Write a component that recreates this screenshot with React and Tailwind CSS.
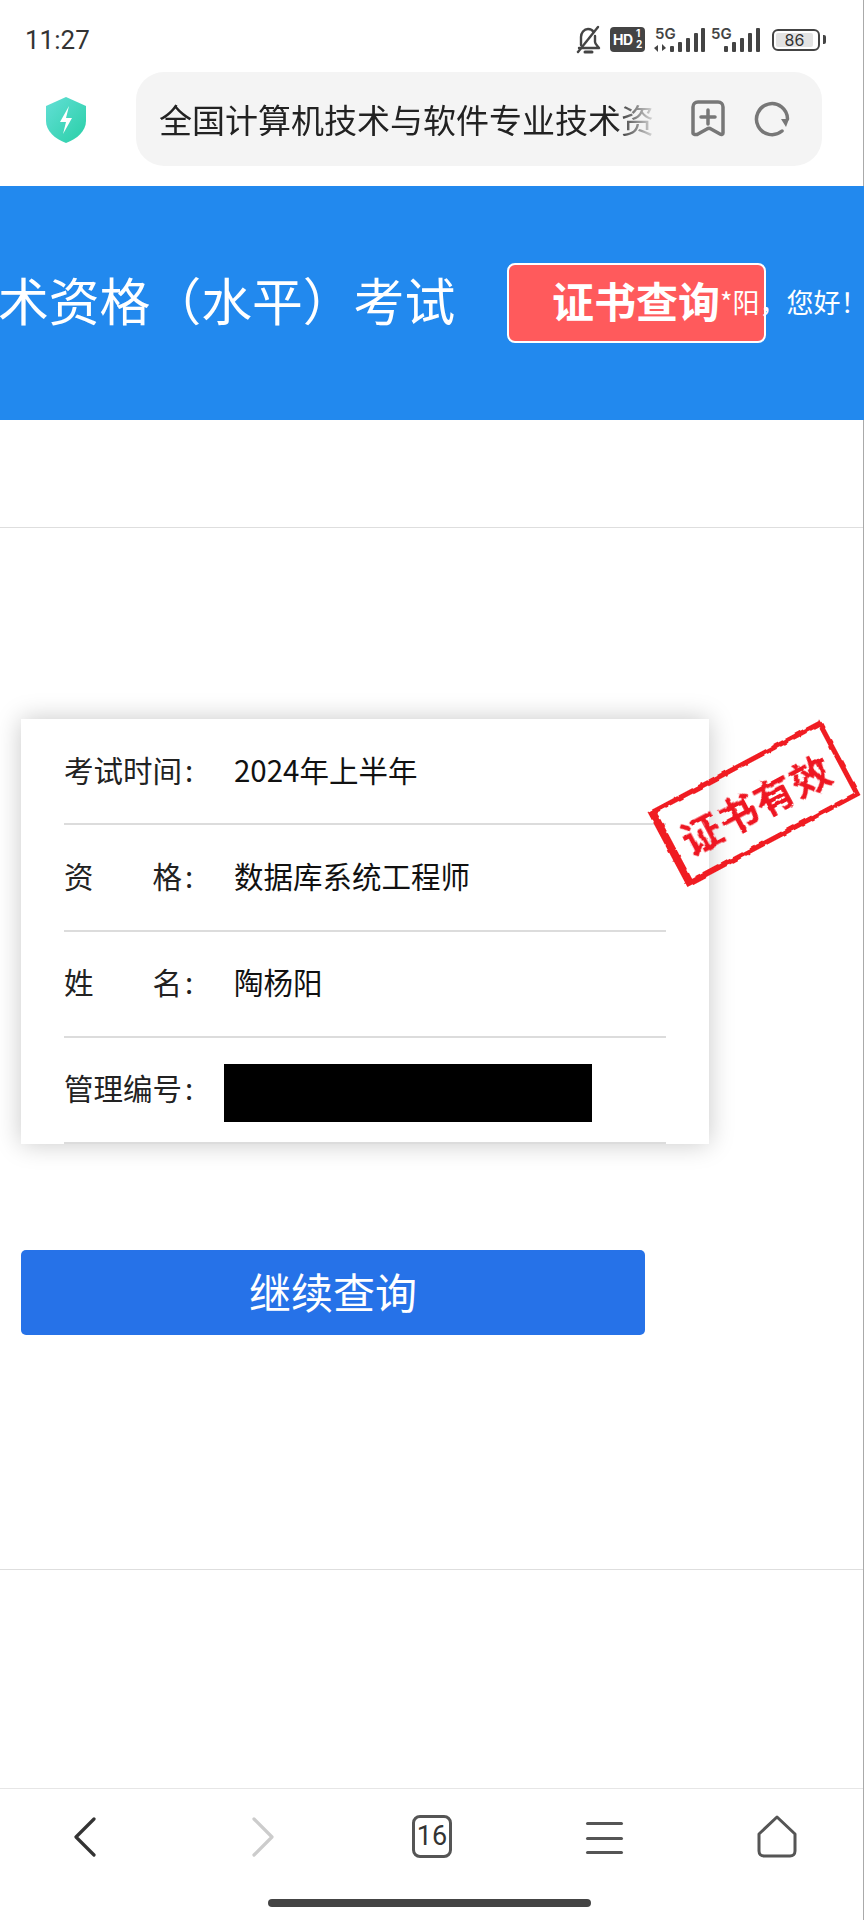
import React from "react";

const cjk = { fontFamily: '"Noto Sans CJK SC", "Noto Sans", sans-serif' };

function Row({ label, value, children }) {
  return (
    <div className="flex h-[106.25px] items-center border-b-2 border-[#dcdcdc] pb-[5px]">
      <div className="flex w-[118px] shrink-0 justify-between text-[29.5px] text-[#222]">
        {label.map((c, i) => (
          <span key={i}>{c}</span>
        ))}
      </div>
      <span className="ml-[3px] w-[6px] shrink-0 text-[29.5px] text-[#222]">:</span>
      {value ? <div className="ml-[43px] text-[29.5px] text-[#111]">{value}</div> : children}
    </div>
  );
}

function StatusIcons() {
  return (
    <div className="flex items-center">
      <svg width="28" height="30" viewBox="0 0 28 30" fill="none" stroke="#444" strokeWidth="2.400" strokeLinecap="round" strokeLinejoin="round">
        <path d="M7 20V12c0-4 3-8 7-8 2.500 0 4.500 1 5.500 3M21 11v6c0 2 2.500 4 4 6H5" />
        <path d="M4 27L24 2" />
        <path d="M11 27h7" strokeWidth="3" />
      </svg>
      <div className="ml-[8px] flex h-[25px] w-[35px] items-center justify-center rounded-[4px] bg-[#444]">
        <svg width="35" height="25" viewBox="0 0 35 25">
          <text x="3" y="18" fill="#fff" fontSize="14" fontWeight="700" fontFamily="Inter, sans-serif" letterSpacing="-0.5">HD</text>
          <text x="26" y="10" fill="#fff" fontSize="10" fontWeight="700" fontFamily="Inter, sans-serif">1</text>
          <text x="26" y="21" fill="#fff" fontSize="10" fontWeight="700" fontFamily="Inter, sans-serif">2</text>
        </svg>
      </div>
      <svg className="ml-[9px] overflow-visible" width="52" height="26" viewBox="0 0 52 26">
        <text x="1" y="12" fill="#444" fontSize="15" fontWeight="600" fontFamily="Inter, sans-serif">5G</text>
        <path d="M0 21l4-3v7zM8 17v7l4-3z" fill="#444" />
        <rect x="16" y="19" width="4" height="6" rx="1" fill="#444" />
        <rect x="24" y="15" width="4" height="10" rx="1" fill="#444" />
        <rect x="32" y="11" width="4" height="14" rx="1" fill="#444" />
        <rect x="40" y="6" width="4" height="19" rx="1" fill="#444" />
        <rect x="47" y="1" width="4" height="24" rx="1" fill="#444" />
      </svg>
      <svg className="ml-[5px] overflow-visible" width="50" height="26" viewBox="0 0 50 26">
        <text x="0" y="12" fill="#444" fontSize="15" fontWeight="600" fontFamily="Inter, sans-serif">5G</text>
        <rect x="13" y="19" width="4" height="6" rx="1" fill="#444" />
        <rect x="21" y="15" width="4" height="10" rx="1" fill="#444" />
        <rect x="29" y="11" width="4" height="14" rx="1" fill="#444" />
        <rect x="37" y="6" width="4" height="19" rx="1" fill="#444" />
        <rect x="45" y="1" width="4" height="24" rx="1" fill="#444" />
      </svg>
      <div className="ml-[11px] flex h-[22px] w-[48px] items-center rounded-[6px] border-2 border-[#444] p-[2px]">
        <div className="flex h-full w-[37px] items-center justify-center rounded-[2px] bg-[#e3e3e3] text-[16px] leading-none text-[#333]" style={{ fontFamily: "Inter, sans-serif" }}>
          86
        </div>
      </div>
      <div className="ml-[3px] h-[9px] w-[3px] rounded-r-[2px] bg-[#444]" />
    </div>
  );
}

export default function App() {
  return (
    <div className="relative flex h-[1920px] w-[864px] flex-col overflow-hidden bg-white" style={cjk}>
      <div className="shrink-0 border-r border-[#aaa]">
        {/* status bar */}
        <div className="flex h-[72px] items-center justify-between pl-[25px] pr-[37px] pt-[7px]">
          <span className="text-[26px] leading-none text-[#333]" style={{ fontFamily: "Roboto, sans-serif" }}>
            11:27
          </span>
          <StatusIcons />
        </div>

        {/* address bar */}
        <div className="flex h-[114px] items-start pl-[46px]">
          <svg className="mt-[25px]" width="40" height="46" viewBox="0 0 40 46">
            <defs>
              <linearGradient id="sh" x1="0" y1="0" x2="1" y2="1">
                <stop offset="0" stopColor="#63dfd6" />
                <stop offset="1" stopColor="#28cfa6" />
              </linearGradient>
            </defs>
            <path d="M20 0L40 9v15c0 10-9 18-20 22C9 42 0 34 0 24V9z" fill="url(#sh)" />
            <path d="M23 9l-9 16h6l-3 12 9-16h-6z" fill="#fff" />
          </svg>
          <div className="ml-[50px] flex h-[94px] w-[686px] items-center rounded-[28px] bg-[#f4f4f4] pl-[23px]">
            <div
              className="w-[495px] overflow-hidden whitespace-nowrap text-[33px] leading-none text-[#222]"
              style={{ maskImage: "linear-gradient(90deg,#000 92%,rgba(0,0,0,0.12) 100%)" }}
            >
              全国计算机技术与软件专业技术资
            </div>
            <svg className="ml-[37px]" width="34" height="38" viewBox="0 0 34 38" fill="none" stroke="#777" strokeWidth="3.500" strokeLinejoin="round" strokeLinecap="round">
              <path d="M2 33V7c0-3 2-5 5-5h20c3 0 5 2 5 5v26c0 1.500-1.500 2-3 1l-9-5c-1-.7-3-.7-4 0l-9 5c-1.500 1-5 .5-5-1z" />
              <path d="M17 10v14M10 17h14" />
            </svg>
            <svg className="ml-[28px]" width="38" height="36" viewBox="0 0 38 36" fill="none" stroke="#777" strokeWidth="3.500" strokeLinecap="round">
              <path d="M29 30A15.500 15.500 0 1 1 34.500 18" />
              <path d="M28 18h8l-3 8z" fill="#777" stroke="none" />
            </svg>
          </div>
        </div>
      </div>

      {/* blue banner */}
      <div className="relative flex h-[234px] shrink-0 items-center whitespace-nowrap bg-[#2289ee] text-white">
        <div className="ml-[-2px] pb-[8px] text-[50.8px] leading-none">术资格（水平）考试</div>
        <div className="ml-[51.8px] flex h-[80px] w-[259px] shrink-0 items-center rounded-[8px] border-2 border-white bg-[#ff5a5c] pb-[6px] pl-[43px]">
          <span className="text-[42px] font-bold leading-none">证书查询</span>
        </div>
        <div className="absolute left-[720px] top-[102px] text-[27px] leading-none">*阳，您好！</div>
      </div>

      <div className="flex flex-1 flex-col border-r border-[#aaa]">
        {/* section */}
        <div className="mt-[107px] flex h-[1043px] shrink-0 flex-col border-y border-[#dedede]">
          <div className="relative ml-[21px] mt-[191px] w-[688px] bg-white px-[43px] shadow-[0_0_24px_rgba(0,0,0,0.22)]">
            <Row label={["考", "试", "时", "间"]} value="2024年上半年" />
            <Row label={["资", "格"]} value="数据库系统工程师" />
            <Row label={["姓", "名"]} value="陶杨阳" />
            <Row label={["管", "理", "编", "号"]}>
              <div className="ml-[33px] mt-[11px] h-[58px] w-[368px] bg-black" />
            </Row>

            {/* stamp */}
            <svg className="absolute" width="0" height="0">
              <filter id="rough">
                <feTurbulence type="fractalNoise" baseFrequency="0.12" numOctaves="2" seed="4" />
                <feDisplacementMap in="SourceGraphic" scale="4" />
              </filter>
            </svg>
            <div className="absolute left-[635px] top-[42px] flex h-[85px] w-[196px] rotate-[-28deg] items-center justify-center border-[5px] border-l-[8px] border-[#f01c24] [filter:url(#rough)]">
              <span className="text-[40px] font-bold leading-none tracking-[1px] text-[#ee1620]">证书有效</span>
            </div>
          </div>

          <button className="ml-[21px] mt-[106px] flex h-[85px] w-[624px] items-center justify-center rounded-[5px] bg-[#2672e8] pb-[4px] text-[42px] leading-none text-white">
            继续查询
          </button>
        </div>

        <div className="flex-1" />

        {/* bottom nav */}
        <div className="relative h-[132px] shrink-0 border-t border-[#e6e6e6]">
          <div className="flex h-[100px] items-start">
            <svg className="ml-[72px] mt-[28px]" width="26" height="40" viewBox="0 0 26 40" fill="none" stroke="#333" strokeWidth="3.200" strokeLinecap="round" strokeLinejoin="round">
              <path d="M22 2L4 20l18 18" />
            </svg>
            <svg className="ml-[152px] mt-[28px]" width="26" height="40" viewBox="0 0 26 40" fill="none" stroke="#ccc" strokeWidth="3.200" strokeLinecap="round" strokeLinejoin="round">
              <path d="M4 2l18 18L4 38" />
            </svg>
            <div className="ml-[136px] mt-[26px] flex h-[43px] w-[40px] items-center justify-center rounded-[8px] border-[3px] border-[#555] text-[27px] leading-none text-[#333]" style={{ fontFamily: "Roboto, sans-serif" }}>
              16
            </div>
            <div className="ml-[134px] mt-[33px] flex h-[32px] w-[37px] flex-col justify-between">
              <div className="h-[3px] rounded-full bg-[#555]" />
              <div className="h-[3px] rounded-full bg-[#555]" />
              <div className="h-[3px] rounded-full bg-[#555]" />
            </div>
            <svg className="ml-[133px] mt-[26px]" width="42" height="43" viewBox="0 0 42 43" fill="none" stroke="#555" strokeWidth="3" strokeLinejoin="round">
              <path d="M21 2l18 17v17c0 3-2 5-5 5H8c-3 0-5-2-5-5V19z" />
            </svg>
          </div>
          <div className="absolute bottom-[13px] left-[268px] h-[8px] w-[323px] rounded-full bg-[#444]" />
        </div>
      </div>
    </div>
  );
}
